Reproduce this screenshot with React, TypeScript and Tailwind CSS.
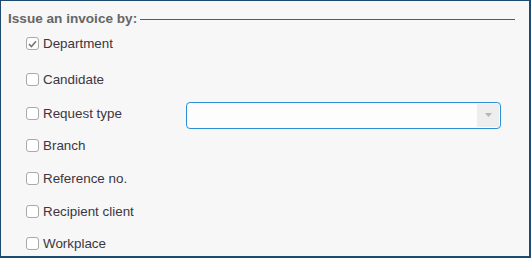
import { useState } from "react";

const rows = [
	{ label: "Department", checked: true, cls: "mt-0" },
	{ label: "Candidate", checked: false, cls: "mt-1" },
	{ label: "Request type", checked: false, cls: "mt-[2px]", select: true },
	{ label: "Branch", checked: false, cls: "mt-0" },
	{ label: "Reference no.", checked: false, cls: "mt-[1px]" },
	{ label: "Recipient client", checked: false, cls: "mt-[1px]" },
	{ label: "Workplace", checked: false, cls: "mt-0" },
];

const Box = ({ checked, onClick }: { checked: boolean; onClick: () => void }) => (
	<span
		onClick={onClick}
		className="w-[13px] h-[13px] rounded-[3px] border border-[#a9a9a9] bg-white flex items-center justify-center shrink-0"
	>
		{checked && (
			<svg width="9" height="8" viewBox="0 0 9 8">
				<path d="M1 4.2 L3.4 6.5 L8 1.2" fill="none" stroke="#777" strokeWidth="1.6" />
			</svg>
		)}
	</span>
);

export default function App() {
	const [state, setState] = useState(rows.map((r) => r.checked));

	return (
		<div
			className="w-[531px] h-[258px] bg-[#f7f7f7] border-t border-l border-r-2 border-b-2 border-[#1d4a6e] overflow-hidden"
			style={{ fontFamily: '"Liberation Sans", Arial, sans-serif' }}
		>
			<div className="pt-[10px] pl-[7px] pr-[14px] flex items-center gap-[3px]">
				<span className="text-[13.6px] leading-[15px] font-bold text-[#666]">Issue an invoice by:</span>
				<div className="flex-1 h-px bg-[#5a5a5a] mt-[1px]" />
			</div>
			<div className="flex flex-col mt-[2px] pl-[25px]">
				{rows.map((r, i) => (
					<div key={r.label} className={`h-[32px] flex items-center ${r.cls}`}>
						<div className="w-[160px] flex items-center gap-[4px]">
							<Box
								checked={state[i]}
								onClick={() => setState(state.map((v, j) => (j === i ? !v : v)))}
							/>
							<span className="text-[13.4px] text-[#3b3640]">{r.label}</span>
						</div>
						{r.select && (
							<div className="mt-[2px] w-[315px] h-[27px] rounded-[4px] border-[1.5px] border-[#2a8fd6] bg-[#fdfdfd] flex justify-end items-stretch p-[1px]">
								<div className="w-[22px] bg-[#eeeeee] flex items-center justify-center">
									<svg width="7" height="4" viewBox="0 0 7 4">
										<path d="M0 0 L7 0 L3.5 4 Z" fill="#b5b5b5" />
									</svg>
								</div>
							</div>
						)}
					</div>
				))}
			</div>
		</div>
	);
}
